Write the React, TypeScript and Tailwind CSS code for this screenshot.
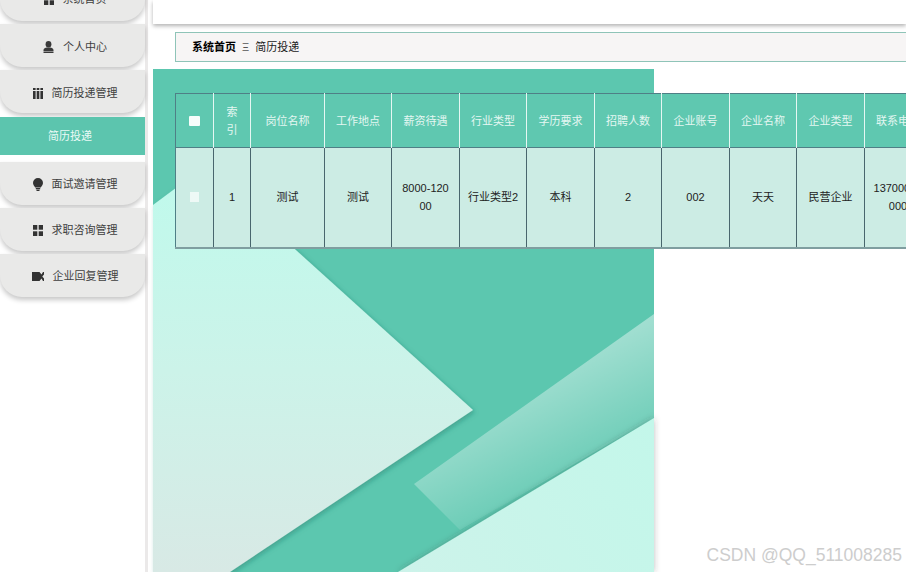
import React from 'react';

const FONT = "font-['Liberation_Sans','Noto_Sans_CJK_SC',sans-serif]";

const PersonIcon = () => (
  <svg width="11" height="12" viewBox="0 0 11 12" fill="#3a3a3a">
    <ellipse cx="5.5" cy="3.2" rx="2.9" ry="3.2" />
    <path d="M0.5 9c0-1.5 2-2 3.2-2.400h3.600C8.500 7 10.500 7.500 10.500 9v1H.5z" />
    <rect x="0.500" y="10.500" width="10" height="1.500" />
  </svg>
);

const ColumnsIcon = () => (
  <svg width="10" height="11" viewBox="0 0 10 11" fill="#333">
    <rect x="0" y="0" width="2.600" height="2" />
    <rect x="3.700" y="0" width="2.600" height="2" />
    <rect x="7.400" y="0" width="2.600" height="2" />
    <rect x="0" y="3" width="2.600" height="8" />
    <rect x="3.700" y="3" width="2.600" height="8" />
    <rect x="7.400" y="3" width="2.600" height="8" />
  </svg>
);

const BulbIcon = () => (
  <svg width="10" height="13" viewBox="0 0 10 13" fill="#333">
    <path d="M5 0a5 5 0 0 1 5 5c0 2-1.500 3-2.200 4.500H2.200C1.500 8 0 7 0 5a5 5 0 0 1 5-5z" />
    <rect x="2.800" y="10" width="4.400" height="1.300" />
    <rect x="3.500" y="11.700" width="3" height="1.300" />
  </svg>
);

const GridIcon = () => (
  <svg width="10" height="11" viewBox="0 0 10 11" fill="#333">
    <rect x="0" y="0" width="4.300" height="4.700" />
    <rect x="5.700" y="0" width="4.300" height="4.700" />
    <rect x="0" y="6.300" width="4.300" height="4.700" />
    <rect x="5.700" y="6.300" width="4.300" height="4.700" />
  </svg>
);

const TicketIcon = () => (
  <svg width="12" height="9" viewBox="0 0 12 9" fill="#333">
    <path d="M0 0h7.500l2 2.500L11 0h1v2.500L10.300 4.500 12 6.500V9h-1L9.500 6.500 7.500 9H0z" />
  </svg>
);

interface MenuItem {
  label: string;
  icon?: React.ReactNode;
  active?: boolean;
  pad?: string;
}

const MENU_ITEMS: MenuItem[] = [
  { label: '系统首页', icon: <GridIcon />, pad: 'pt-0' },
  { label: '个人中心', icon: <PersonIcon />, pad: 'pt-[3px]' },
  { label: '简历投递管理', icon: <ColumnsIcon />, pad: 'pt-[3px]' },
  { label: '简历投递', active: true },
  { label: '面试邀请管理', icon: <BulbIcon />, pad: 'pt-[1px]' },
  { label: '求职咨询管理', icon: <GridIcon />, pad: 'pt-[1px]' },
  { label: '企业回复管理', icon: <TicketIcon />, pad: 'pt-[1px]' },
];

const COLUMNS = [
  { title: '', width: 'w-[38px]', value: '' },
  { title: '索引', width: 'w-[37px]', value: '1' },
  { title: '岗位名称', width: 'w-[74px]', value: '测试' },
  { title: '工作地点', width: 'w-[67px]', value: '测试' },
  { title: '薪资待遇', width: 'w-[68px]', value: '8000-12000' },
  { title: '行业类型', width: 'w-[67px]', value: '行业类型2', tight: true },
  { title: '学历要求', width: 'w-[68px]', value: '本科' },
  { title: '招聘人数', width: 'w-[67px]', value: '2' },
  { title: '企业账号', width: 'w-[68px]', value: '002' },
  { title: '企业名称', width: 'w-[67px]', value: '天天' },
  { title: '企业类型', width: 'w-[68px]', value: '民营企业' },
  { title: '联系电话', width: 'w-[67px]', value: '13700000000' },
];

const Sidebar = () => (
  <aside className="flex w-[148px] shrink-0 flex-col border-r-[3px] border-[#ebe9e9] bg-white">
    <div className="-mt-[22px] flex flex-col">
      {MENU_ITEMS.map((item) =>
        item.active ? (
          <div
            key={item.label}
            className="mb-[7px] mt-[1px] flex h-[38px] items-center justify-center bg-[#5cc5ae] pr-[5px] text-[11px] text-[#eafaf6]"
          >
            {item.label}
          </div>
        ) : (
          <div
            key={item.label}
            className={`mb-[3px] flex h-[43px] items-center justify-center gap-[9px] rounded-b-[22px] bg-[#e9e9e8] pl-[5px] text-[11px] text-[#3f3f3f] shadow-[0_3px_5px_rgba(0,0,0,0.22)] ${item.pad}`}
          >
            {item.icon}
            <span>{item.label}</span>
          </div>
        )
      )}
    </div>
  </aside>
);

const PanelArt = () => (
  <svg
    className="absolute left-0 top-0 overflow-visible"
    width="501"
    height="503"
    viewBox="0 0 501 503"
  >
    <defs>
      <linearGradient id="light-a" x1="0" y1="100" x2="0" y2="503" gradientUnits="userSpaceOnUse">
        <stop offset="0" stopColor="#bffaec" />
        <stop offset="0.5" stopColor="#ccf3e9" />
        <stop offset="1" stopColor="#d8e9e5" />
      </linearGradient>
      <linearGradient id="light-b" x1="501" y1="349" x2="245" y2="503" gradientUnits="userSpaceOnUse">
        <stop offset="0" stopColor="#c3f7ea" />
        <stop offset="1" stopColor="#cdf3ea" />
      </linearGradient>
      <linearGradient id="band" x1="400" y1="300" x2="450" y2="400" gradientUnits="userSpaceOnUse">
        <stop offset="0" stopColor="#fff" stopOpacity="0.42" />
        <stop offset="1" stopColor="#fff" stopOpacity="0.08" />
      </linearGradient>
      <filter id="soft-a" x="-10%" y="-10%" width="125%" height="125%">
        <feDropShadow dx="2" dy="2" stdDeviation="2.500" floodColor="#1d6f5e" floodOpacity="0.4" />
      </filter>
      <filter id="soft-b" x="-10%" y="-20%" width="120%" height="140%">
        <feDropShadow dx="0" dy="0" stdDeviation="3" floodColor="#333" floodOpacity="0.32" />
      </filter>
    </defs>
    <rect width="501" height="503" fill="#5cc7af" />
    <polygon points="501,245 261,415 307,461 501,349" fill="url(#band)" />
    <polygon points="0,136 51,98 320,341 77,503 0,503" fill="url(#light-a)" filter="url(#soft-a)" />
    <polygon points="501,349 245,503 501,503" fill="url(#light-b)" filter="url(#soft-b)" />
  </svg>
);

const DataTable = () => (
  <table className="relative w-[756px] table-fixed border-collapse text-center text-[11px]">
    <thead>
      <tr className="h-[54px] border-y border-[#4f7f86] bg-[#5fc8b0] text-[#e4f7f2]">
        {COLUMNS.map((col, i) => (
          <th
            key={i}
            className={`${col.width} border-r border-[#e6f7f3] px-[8px] font-normal leading-[18px] first:border-l first:border-l-[#4f7f86]`}
          >
            {i === 0 ? <span className="mx-auto block h-[10px] w-[11px] rounded-[1px] bg-[#f7fdfb]" /> : col.title}
          </th>
        ))}
      </tr>
    </thead>
    <tbody>
      <tr className="h-[100px] border-b-2 border-[#7f9ea0] bg-[#ccece4] text-[#222]">
        {COLUMNS.map((col, i) => (
          <td
            key={i}
            className={`break-all border-r border-[#48666d] leading-[18px] first:border-l first:border-l-[#4f7f86] ${col.tight ? 'px-[6px]' : 'px-[8px]'}`}
          >
            {i === 0 ? <span className="mx-auto block h-[10px] w-[9px] bg-[#eef9f6]" /> : col.value}
          </td>
        ))}
      </tr>
    </tbody>
  </table>
);

const App = () => (
  <div className={`relative flex h-[572px] w-[906px] overflow-hidden bg-white ${FONT}`}>
    <Sidebar />
    <main className="ml-[5px] flex min-w-0 flex-1 flex-col">
      <div className="h-[24px] shrink-0 bg-white shadow-[0_2px_4px_rgba(0,0,0,0.3)]" />
      <div className="ml-[22px] mt-[8px] flex h-[30px] w-[760px] shrink-0 items-center gap-[6px] border border-[#8fc4b8] bg-[#f7f5f5] pl-4 text-[11px] text-[#222]">
        <span className="font-bold text-black">系统首页</span>
        <span className="text-[#555]">Ξ</span>
        <span>简历投递</span>
      </div>
      <div className="relative mt-[7px] h-[503px] w-[501px] shrink-0">
        <PanelArt />
        <div className="relative pl-[22px] pt-[24px]">
          <DataTable />
        </div>
      </div>
    </main>
    <span className="absolute bottom-[4px] right-[4px] font-['Liberation_Sans',sans-serif] text-[17.5px] text-[#cdcdcd]">
      CSDN @QQ_511008285
    </span>
  </div>
);

export default App;
